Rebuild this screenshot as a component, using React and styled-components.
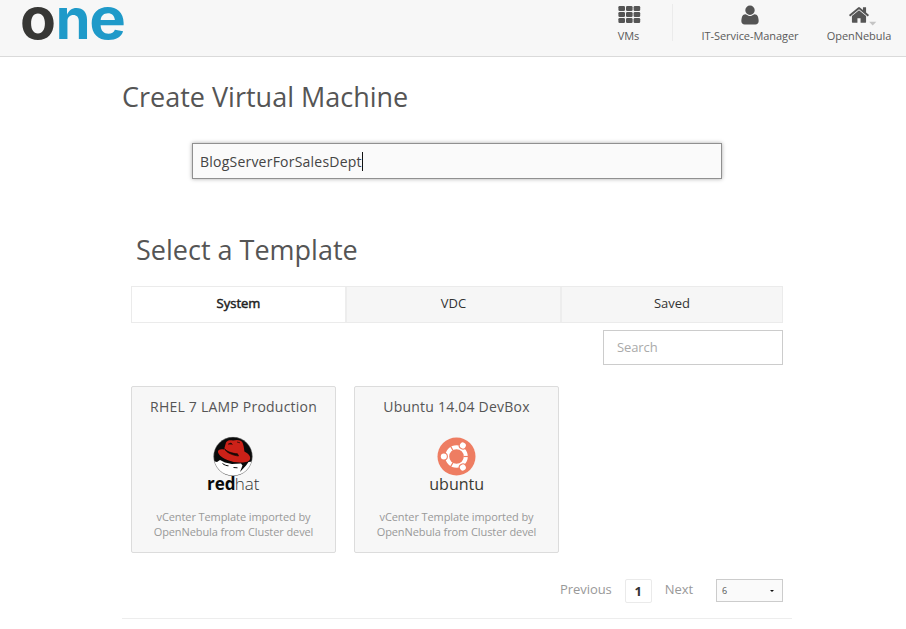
import React from 'react';
import styled, { createGlobalStyle } from 'styled-components';

const GlobalStyle = createGlobalStyle`
  * { box-sizing: border-box; }
  body {
    margin: 0;
    background: #fff;
    color: #4d4d4d;
    font-family: "Open Sans", "Noto Sans", sans-serif;
    overflow: hidden;
  }
`;

const Header = styled.header`
  display: flex;
  justify-content: space-between;
  height: 57px;
  background: #f7f7f7;
  border-bottom: 1px solid #dadada;
`;

const Brand = styled.svg`
  display: block;
  width: 130px;
  height: 50px;
  overflow: visible;
`;

const Nav = styled.nav`
  display: flex;
`;

const NavItem = styled.a`
  display: flex;
  flex-direction: column;
  align-items: center;
  width: ${(p) => p.$width}px;
  height: 42px;
  margin-top: 4px;
  font-size: 11px;
  line-height: 15px;
  letter-spacing: -0.06px;
  color: #5a5a5a;
  white-space: nowrap;
`;

const NavDivider = styled.div`
  width: 1px;
  height: 37px;
  margin-top: 4px;
  background: #ebebeb;
`;

const NavIcon = styled.svg`
  display: block;
  width: 22px;
  height: 22px;
  margin-bottom: 2px;
  fill: #555;
  overflow: visible;
`;

const Page = styled.main`
  width: 670px;
  height: 562px;
  margin-left: 122px;
  border-bottom: 1px solid #ededed;
`;

const Title = styled.h1`
  margin: 0;
  padding-top: 21px;
  font-size: 27px;
  font-weight: 400;
  line-height: 38px;
  color: #555;
`;

const NameField = styled.div`
  display: flex;
  align-items: center;
  width: 530px;
  height: 36px;
  margin: 27px 0 0 70px;
  padding: 1px 0 0 7px;
  border: 1px solid #909090;
  background: #fafafa;
  box-shadow: 0 0 4px #aaa;
  font-size: 14px;
  letter-spacing: 0.22px;
  color: #444;
`;

const Caret = styled.span`
  width: 1px;
  height: 19px;
  background: #111;
`;

const Section = styled.section`
  margin: 31px 0 0 9px;
  width: 652px;
`;

const SectionTitle = styled(Title)`
  padding-left: 5px;
`;

const Tabs = styled.div`
  display: grid;
  grid-template-columns: 213px 215px 222px;
  height: 37px;
  margin-top: 17px;
  border: 1px solid #ebebeb;
`;

const Tab = styled.div`
  display: flex;
  align-items: center;
  justify-content: center;
  padding-bottom: 3px;
  border-left: ${(p) => (p.$active ? 0 : 2)}px solid #ededed;
  background: ${(p) => (p.$active ? '#fff' : '#f6f6f6')};
  font-size: 13px;
  line-height: 16px;
  color: ${(p) => (p.$active ? '#222' : '#333')};
  -webkit-text-stroke: ${(p) => (p.$active ? 0.5 : 0)}px #222;
`;

const SearchBox = styled.div`
  display: flex;
  align-items: center;
  width: 180px;
  height: 35px;
  margin: 7px 0 0 auto;
  padding: 0 0 1px 13px;
  border: 1px solid #ccc;
  font-size: 13px;
  letter-spacing: -0.1px;
  color: #aaa;
`;

const Cards = styled.div`
  display: flex;
  gap: 18px;
  margin-top: 21px;
`;

const Card = styled.article`
  display: flex;
  flex-direction: column;
  align-items: center;
  width: 205px;
  height: 167px;
  padding-top: 10px;
  border: 1px solid #dcdcdc;
  border-radius: 2px;
  background: #f7f7f7;
  text-align: center;
`;

const CardTitle = styled.h2`
  margin: 0;
  font-size: 14px;
  font-weight: 400;
  line-height: 20px;
  letter-spacing: 0.22px;
  color: #555;
`;

const CardLogo = styled.svg`
  display: block;
  width: 60px;
  height: 60px;
  margin-top: 18px;
`;

const CardText = styled.p`
  margin: 14px 0 0;
  font-size: 11px;
  line-height: 15px;
  letter-spacing: -0.09px;
  color: #999;
`;

const Pager = styled.footer`
  display: flex;
  align-items: center;
  justify-content: flex-end;
  height: 24px;
  margin-top: 26px;
  font-size: 13px;
  color: #999;
`;

const PagerLink = styled.span`
  line-height: 18px;
  padding-bottom: 4px;
  letter-spacing: -0.06px;
`;

const CurrentPage = styled.span`
  display: flex;
  align-items: center;
  justify-content: center;
  width: 27px;
  height: 24px;
  margin: 0 13px 0 13px;
  padding-bottom: 1px;
  border: 1px solid #eaeaea;
  border-radius: 2px;
  font-weight: 700;
  color: #333;
`;

const PageSize = styled.div`
  display: flex;
  align-items: center;
  justify-content: space-between;
  width: 67px;
  height: 23px;
  margin: 0 0 1px 23px;
  padding: 0 8px 0 5px;
  border: 1px solid #ccc;
  background: #fafafa;
  font-size: 9px;
  color: #555;
`;

const Arrow = styled.span`
  border: 2px solid transparent;
  border-top-color: #111;
  border-bottom: 0;
`;

const OneLogo = () => (
  <Brand viewBox="0 0 130 50" role="img" aria-label="one">
    <g fontFamily="Inter, Liberation Sans, sans-serif" fontWeight="700" fontSize="57" fill="#1f9ac9">
      <text transform="translate(20 39.400) scale(1.030 1)" fill="#373735">o</text>
      <text transform="translate(55.700 39.400) scale(.98 1)">n</text>
      <text transform="translate(89.200 39.400) scale(1.080 1)">e</text>
    </g>
  </Brand>
);

const GridIcon = () => (
  <NavIcon viewBox="0 0 22 22">
    {[2, 8, 14].map((y) =>
      [0.4, 8, 15.6].map((x) => (
        <rect key={`${x}-${y}`} x={x} y={y} width="6.6" height="4.9" rx="1.2" />
      ))
    )}
  </NavIcon>
);

const UserIcon = () => (
  <NavIcon viewBox="0 0 1792 1792">
    <path d="M1600 1405q0 120-73 189.5t-194 69.5h-874q-121 0-194-69.5t-73-189.5q0-53 3.5-103.5t14-109 26.5-108.5 43-97.5 62-81 85.5-53.5 111.5-20q9 0 42 21.5t74.5 48 108 48 133.5 21.5 133.5-21.5 108-48 74.5-48 42-21.5q61 0 111.5 20t85.5 53.5 62 81 43 97.5 26.5 108.5 14 109 3.5 103.5zm-320-893q0 159-112.5 271.5t-271.5 112.5-271.5-112.5-112.5-271.5 112.5-271.5 271.5-112.5 271.5 112.5 112.5 271.5z" />
  </NavIcon>
);

const HomeIcon = () => (
  <NavIcon viewBox="0 0 1792 1792">
    <path d="M1472 992v480q0 26-19 45t-45 19h-384v-384h-256v384h-384q-26 0-45-19t-19-45v-480q0-1 .5-3t.5-3l575-474 575 474q1 2 1 6zm223-69l-62 74q-8 9-21 11h-3q-13 0-21-7l-692-577-692 577q-12 8-24 7-13-2-21-11l-62-74q-8-10-7-23.5t11-21.5l719-599q32-26 76-26t76 26l244 204v-195q0-14 9-23t23-9h192q14 0 23 9t9 23v408l219 182q10 8 11 21.5t-7 23.5z" />
    <path d="M1720 1450h590l-295 310z" fill="#c4c4c4" />
  </NavIcon>
);

const RedHatLogo = () => (
  <CardLogo viewBox="0 0 60 60" role="img" aria-label="redhat">
    <defs>
      <clipPath id="badge"><circle cx="29" cy="21.5" r="19.3" /></clipPath>
    </defs>
    <circle cx="29" cy="21.5" r="19.4" fill="#0a0a0a" />
    <g clipPath="url(#badge)">
      <path d="M8 25.700 13 27l3-2 5 2.500 7 1.500 9-.5 1.500 2-2.500 6.500 6-6.500 2.500-3.500L52 26v18H8z" fill="#fff" />
      <path d="M18.500 28.500c2 1.500 4 2.300 6 2.300M29.500 32.500l4 .3" fill="none" stroke="#111" strokeWidth="1" />
    </g>
    <circle cx="29" cy="21.5" r="19.3" fill="none" stroke="#999" strokeWidth=".4" />
    <path d="M22 7.600c1.600-2.800 4.600-2.700 7-2 4-1.400 8-.4 9.200 1.400 1.400 3 1.800 6 2.200 9.600 3.400 1.800 6.500 4.400 5.700 7.500-.8 3.200-6.800 4-12.900 3.200C24 26.600 15.200 21.800 14 17.200c-.6-2.700 3-3.500 6-2.600z" fill="#cc2118" />
    <path d="M20.500 13.600c1.700 2.600 7 4.800 13 5.200l1 2.200c-6-.6-12.500-3.500-14-7.400zM24 9.200l3-1.200 1.500 1.400M33 7l3 .8" fill="#180806" stroke="#180806" strokeWidth=".7" />
    <text y="55" fontFamily="Open Sans, sans-serif" fontSize="17">
      <tspan x="3" fontWeight="700" fill="#0a0a0a">red</tspan>
      <tspan x="30.700" fontWeight="300" fill="#333">hat</tspan>
    </text>
  </CardLogo>
);

const UbuntuLogo = () => (
  <CardLogo viewBox="0 0 60 60" role="img" aria-label="ubuntu">
    <circle cx="29.500" cy="21.500" r="19" fill="#ee7d62" />
    <circle cx="29.500" cy="21.500" r="9.300" fill="none" stroke="#fff" strokeWidth="4" />
    {[0, 120, 240].map((angle) => (
      <g key={angle} transform={`rotate(${angle} 29.5 21.5)`}>
        <circle cx="16.800" cy="21.500" r="4.100" fill="#ee7d62" />
        <circle cx="16.800" cy="21.500" r="3" fill="#fff" />
        <path d="M36.500 21.500h6" stroke="#ee7d62" strokeWidth="1.200" />
      </g>
    ))}
    <text x="2.200" y="55" fontFamily="Open Sans, sans-serif" fontSize="17" fontWeight="400" fill="#3a3a32" textLength="55" lengthAdjust="spacingAndGlyphs">
      ubuntu
    </text>
  </CardLogo>
);

const templates = [
  { name: 'RHEL 7 LAMP Production', Logo: RedHatLogo },
  { name: 'Ubuntu 14.04 DevBox', Logo: UbuntuLogo },
];

export default function App() {
  return (
    <>
      <GlobalStyle />
      <Header>
        <OneLogo />
        <Nav>
          <NavItem $width={87}><GridIcon />VMs</NavItem>
          <NavDivider />
          <NavItem $width={154}><UserIcon />IT-Service-Manager</NavItem>
          <NavItem $width={64}><HomeIcon />OpenNebula</NavItem>
          <NavItem $width={15} />
        </Nav>
      </Header>
      <Page>
        <Title>Create Virtual Machine</Title>
        <NameField>BlogServerForSalesDept<Caret /></NameField>
        <Section>
          <SectionTitle>Select a Template</SectionTitle>
          <Tabs>
            <Tab $active>System</Tab>
            <Tab>VDC</Tab>
            <Tab>Saved</Tab>
          </Tabs>
          <SearchBox>Search</SearchBox>
          <Cards>
            {templates.map(({ name, Logo }) => (
              <Card key={name}>
                <CardTitle>{name}</CardTitle>
                <Logo />
                <CardText>vCenter Template imported by<br />OpenNebula from Cluster devel</CardText>
              </Card>
            ))}
          </Cards>
          <Pager>
            <PagerLink>Previous</PagerLink>
            <CurrentPage>1</CurrentPage>
            <PagerLink>Next</PagerLink>
            <PageSize>6<Arrow /></PageSize>
          </Pager>
        </Section>
      </Page>
    </>
  );
}
